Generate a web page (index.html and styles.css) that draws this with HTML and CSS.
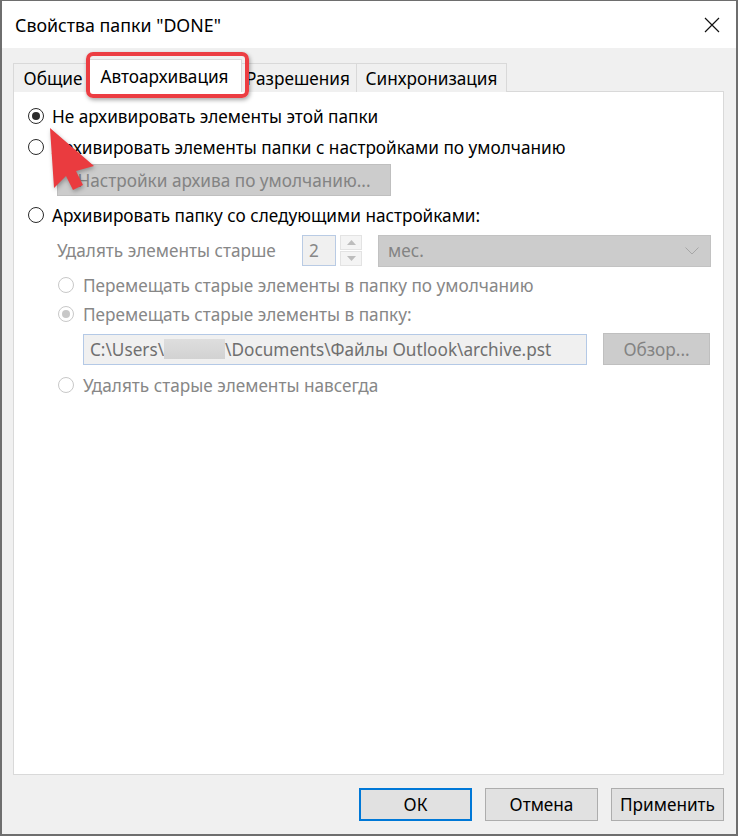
FILE: index.html
```html
<!DOCTYPE html>
<html lang="ru">
<head>
<meta charset="utf-8">
<title>Свойства папки</title>
<link rel="stylesheet" href="styles.css">
</head>
<body>
<div class="window">
  <div class="titlebar">
    <span class="title">Свойства папки "DONE"</span>
    <svg class="close" width="16" height="16" viewBox="0 0 16 16"><path d="M1 1 L15 15 M15 1 L1 15" stroke="#111" stroke-width="1.2" fill="none"/></svg>
  </div>
  <div class="body">
    <div class="tabs">
      <div class="tab t1">Общие</div>
      <div class="tab t2 active">Автоархивация</div>
      <div class="tab t3">Разрешения</div>
      <div class="tab t4">Синхронизация</div>
    </div>
    <div class="panel">
      <div class="row r1"><span class="radio checked"></span><span class="label">Не архивировать элементы этой папки</span></div>
      <div class="row r2"><span class="radio"></span><span class="label">Архивировать элементы папки с настройками по умолчанию</span></div>
      <div class="btnrow"><div class="dbtn wide">Настройки архива по умолчанию...</div></div>
      <div class="row r3"><span class="radio"></span><span class="label">Архивировать папку со следующими настройками:</span></div>
      <div class="delrow">
        <span class="dlabel">Удалять элементы старше</span>
        <div class="spin"><span class="num">2</span></div>
        <div class="spinbtns">
          <div class="sb"><svg width="9" height="5" viewBox="0 0 9 5"><path d="M0 5 L4.5 0 L9 5Z" fill="#bdbdbd"/></svg></div>
          <div class="sb"><svg width="9" height="5" viewBox="0 0 9 5"><path d="M0 0 L4.5 5 L9 0Z" fill="#bdbdbd"/></svg></div>
        </div>
        <div class="select"><span>мес.</span><svg width="14" height="8" viewBox="0 0 14 8"><path d="M0.5 0.5 L7 7 L13.5 0.5" stroke="#a6a6a6" stroke-width="1" fill="none"/></svg></div>
      </div>
      <div class="row sub r4"><span class="radio dis"></span><span class="label dim">Перемещать старые элементы в папку по умолчанию</span></div>
      <div class="row sub r5"><span class="radio dis checked"></span><span class="label dim">Перемещать старые элементы в папку:</span></div>
      <div class="pathrow">
        <div class="path"><span>C:\Users\</span><span class="blur"></span><span>\Documents\Файлы Outlook\archive.pst</span></div>
        <div class="dbtn browse">Обзор...</div>
      </div>
      <div class="row sub r6"><span class="radio dis"></span><span class="label dim">Удалять старые элементы навсегда</span></div>
    </div>
    <div class="footer">
      <div class="btn ok">ОК</div>
      <div class="btn">Отмена</div>
      <div class="btn">Применить</div>
    </div>
  </div>
  <div class="highlight"></div>
  <svg class="arrow" width="60" height="80" viewBox="0 0 60 80">
    <path d="M4 3 L48 41 L30 46 L37 60 L27 65 L20 51 L8 63 Z" fill="#ea3b3f"/>
  </svg>
</div>
</body>
</html>
```

FILE: styles.css
```css
* { box-sizing: border-box; }
html, body { margin: 0; padding: 0; background: #f0f0f0; }
body {
  font-family: "Noto Sans", "Open Sans", sans-serif;
  font-size: 17.2px;
  color: #000;
}
.window {
  position: relative;
  width: 738px;
  height: 836px;
  border: 2px solid #6e6e6e;
  border-top-width: 1px;
  background: #f0f0f0;
  display: flex;
  flex-direction: column;
}
.titlebar {
  height: 47px;
  background: #fff;
  display: flex;
  align-items: center;
  justify-content: space-between;
  padding: 0 16px 0 13px;
  flex-shrink: 0;
}
.title { font-size: 17.8px; color: #000; }
.close { display: block; }
.body {
  flex: 1;
  display: flex;
  flex-direction: column;
  padding: 0 12px 0 11px;
}
.tabs {
  display: flex;
  height: 44px;
  align-items: flex-end;
  position: relative;
  z-index: 2;
  margin-bottom: -1px;
}
.tab {
  height: 29px;
  border: 1px solid #d9d9d9;
  border-bottom: none;
  background: #f0f0f0;
  display: flex;
  align-items: center;
  justify-content: center;
  white-space: nowrap;
}
.t1 { width: 77px; margin-right: -1px; padding-left: 3px; }
.t2 { width: 155px; }
.t3 { width: 118px; margin-left: -1px; }
.t4 { width: 151px; margin-left: -1px; }
.tab.active {
  height: 33px;
  background: #fff;
  margin-left: -2px;
  margin-right: -2px;
  position: relative;
  z-index: 3;
}
.panel {
  height: 684px;
  background: #fff;
  border: 1px solid #d9d9d9;
  padding: 12px 0 0 14px;
  display: flex;
  flex-direction: column;
  position: relative;
  z-index: 1;
}
.row {
  height: 24px;
  display: flex;
  align-items: center;
}
.r2, .r3, .r4 { margin-top: 7px; }
.r5 { margin-top: 5px; }
.r6 { margin-top: 8px; }
.row.sub { padding-left: 30px; }
.radio {
  width: 16px;
  height: 16px;
  border-radius: 50%;
  border: 1.6px solid #2b2b2b;
  background: #fff;
  display: flex;
  align-items: center;
  justify-content: center;
  flex-shrink: 0;
  margin-right: 8px;
}
.radio.checked::after {
  content: "";
  width: 8px;
  height: 8px;
  border-radius: 50%;
  background: #2b2b2b;
}
.radio.dis { border-color: #c8c8c8; }
.radio.dis.checked::after { background: #c8c8c8; }
.row.sub .radio { margin-right: 9px; }
.label { white-space: nowrap; }
.dim { color: #878787; }
.btnrow { margin-top: 5px; padding-left: 29px; display: flex; }
.dbtn {
  height: 32px;
  background: #cccccc;
  border: 1px solid #bfbfbf;
  color: #838383;
  display: flex;
  align-items: center;
  justify-content: center;
  white-space: nowrap;
}
.dbtn.wide { width: 334px; }
.delrow {
  margin-top: 8px;
  height: 31px;
  display: flex;
  align-items: center;
  padding-left: 29px;
}
.dlabel { color: #878787; width: 245px; white-space: nowrap; }
.spin {
  width: 34px;
  height: 31px;
  border: 1px solid #b9cbe4;
  background: #f0f0f0;
  color: #878787;
  display: flex;
  align-items: center;
  padding-left: 6px;
}
.spinbtns {
  margin-left: 4px;
  width: 22px;
  height: 31px;
  display: flex;
  flex-direction: column;
  gap: 1px;
}
.sb {
  flex: 1;
  border: 1px solid #e3e3e3;
  background: #f4f4f4;
  display: flex;
  align-items: center;
  justify-content: center;
}
.sb svg { display: block; }
.select {
  margin-left: 16px;
  width: 333px;
  height: 32px;
  background: #cccccc;
  border: 1px solid #c2c2c2;
  color: #838383;
  display: flex;
  align-items: center;
  justify-content: space-between;
  padding: 0 11px 0 9px;
}
.select svg { display: block; }
.pathrow {
  margin-top: 7px;
  height: 32px;
  display: flex;
  align-items: center;
  padding-left: 55px;
}
.path {
  width: 504px;
  height: 31px;
  background: #f0f0f0;
  border: 1px solid #b4c9e6;
  color: #6f6f6f;
  display: flex;
  align-items: center;
  padding-left: 6px;
  white-space: nowrap;
}
.blur {
  width: 61px;
  height: 20px;
  background: linear-gradient(#dedede, #d2d2d2);
}
.dbtn.browse { margin-left: 16px; width: 107px; }
.footer {
  flex: 1;
  display: flex;
  justify-content: flex-end;
  align-items: flex-start;
  padding-top: 13px;
  gap: 13px;
}
.btn {
  width: 113px;
  height: 33px;
  background: #e1e1e1;
  border: 1px solid #adadad;
  display: flex;
  align-items: center;
  justify-content: center;
}
.btn.ok { border: 2px solid #0078d7; }
.highlight {
  position: absolute;
  left: 84px;
  top: 51px;
  width: 163px;
  height: 46px;
  border: 4px solid #ec3d42;
  border-radius: 7px;
  box-shadow: 1px 2px 4px rgba(0,0,0,0.35);
  z-index: 5;
}
.arrow {
  position: absolute;
  left: 44px;
  top: 124px;
  z-index: 6;
  filter: drop-shadow(1px 2px 2px rgba(0,0,0,0.3));
}
```
